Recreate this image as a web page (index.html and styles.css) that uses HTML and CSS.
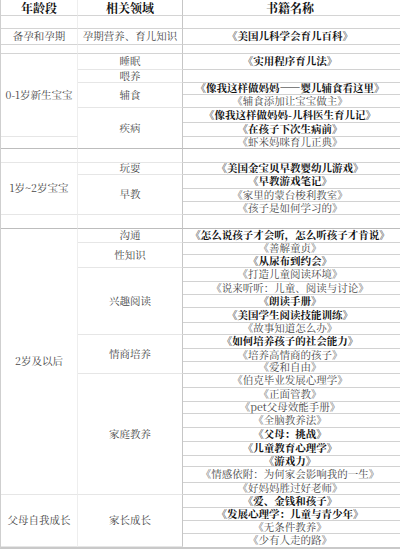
FILE: index.html
```html
<!DOCTYPE html>
<html lang="zh">
<head>
<meta charset="utf-8">
<link rel="stylesheet" href="styles.css">
</head>
<body>
<div class="sheet">
  <div class="c1 hd">年龄段</div><div class="c2 hd">相关领域</div><div class="c3 hd">书籍名称</div>
  <div class="c1 top"></div><div class="c2 top"></div><div class="c3"></div>
  <div class="c1 top">备孕和孕期</div><div class="c2 top">孕期营养、育儿知识</div><div class="c3 b">《美国儿科学会育儿百科》</div>
  <div class="c1 top"></div><div class="c2 top"></div><div class="c3"></div>

  <div class="c1 s6">0-1岁新生宝宝</div><div class="c2">睡眠</div><div class="c3 b">《实用程序育儿法》</div>
  <div class="c2">喂养</div><div class="c3"></div>
  <div class="c2 s2">辅食</div><div class="c3 b">《像我这样做妈妈——婴儿辅食看这里》</div>
  <div class="c3">《辅食添加让宝宝做主》</div>
  <div class="c2 s3 sec">疾病</div><div class="c3 b">《像我这样做妈妈-儿科医生育儿记》</div>
  <div class="c3 b">《在孩子下次生病前》</div>
  <div class="c1 sec"></div><div class="c3 sec">《虾米妈咪育儿正典》</div>
  <div class="c1"></div><div class="c2"></div><div class="c3"></div>

  <div class="c1 s4">1岁~2岁宝宝</div><div class="c2">玩耍</div><div class="c3 b">《美国金宝贝早教婴幼儿游戏》</div>
  <div class="c2 s3">早教</div><div class="c3 b">《早教游戏笔记》</div>
  <div class="c3">《家里的蒙台梭利教室》</div>
  <div class="c3">《孩子是如何学习的》</div>
  <div class="c1 sec"></div><div class="c2 sec"></div><div class="c3 sec"></div>

  <div class="c1 s20">2岁及以后</div><div class="c2">沟通</div><div class="c3 b">《怎么说孩子才会听，怎么听孩子才肯说》</div>
  <div class="c2 s2">性知识</div><div class="c3">《善解童贞》</div>
  <div class="c3 b">《从尿布到约会》</div>
  <div class="c2 s5">兴趣阅读</div><div class="c3">《打造儿童阅读环境》</div>
  <div class="c3">《说来听听：儿童、阅读与讨论》</div>
  <div class="c3 b">《朗读手册》</div>
  <div class="c3 b">《美国学生阅读技能训练》</div>
  <div class="c3">《故事知道怎么办》</div>
  <div class="c2 s3">情商培养</div><div class="c3 b">《如何培养孩子的社会能力》</div>
  <div class="c3">《培养高情商的孩子》</div>
  <div class="c3">《爱和自由》</div>
  <div class="c2 s9">家庭教养</div><div class="c3">《伯克毕业发展心理学》</div>
  <div class="c3">《正面管教》</div>
  <div class="c3">《pet父母效能手册》</div>
  <div class="c3">《全脑教养法》</div>
  <div class="c3 b">《父母：挑战》</div>
  <div class="c3 b">《儿童教育心理学》</div>
  <div class="c3 b">《游戏力》</div>
  <div class="c3">《情感依附：为何家会影响我的一生》</div>
  <div class="c3">《好妈妈胜过好老师》</div>

  <div class="c1 s4">父母自我成长</div><div class="c2 s4">家长成长</div><div class="c3 b">《爱、金钱和孩子》</div>
  <div class="c3 b">《发展心理学：儿童与青少年》</div>
  <div class="c3">《无条件教养》</div>
  <div class="c3 last">《少有人走的路》</div>
</div>
</body>
</html>
```

FILE: styles.css
```css
html, body {
  margin: 0;
  padding: 0;
  background: #ffffff;
}

.sheet {
  width: 400px;
  display: grid;
  grid-template-columns: 77px 105px 218px;
  grid-template-rows: 16px 13px 16px 9px 16px 13px 12px 13px 15px 14px 12px 14px 12px 14px 13px 13px 14px 14px 12px 13px 14px 13px 13px 15px 12px 14px 13px 12px 14px 14px 12px 14px 14px 14px 11px 16px 12px 13px 13px 13px 13px;
  border-left: 1px solid #cfcfcf;
  border-bottom: 2px solid #c9c9c9;
  box-sizing: content-box;
  font-family: "Noto Serif CJK SC", "Noto Sans CJK SC", serif;
  font-size: 10.5px;
  color: #474747;
}

.sheet > div {
  box-sizing: border-box;
  display: flex;
  align-items: center;
  justify-content: center;
  line-height: 1;
  white-space: nowrap;
  overflow: visible;
}

.c1 {
  grid-column: 1;
  border-right: 1px solid #eeeeee;
  border-bottom: 1px solid #e6e6e6;
}

.c2 {
  grid-column: 2;
  border-right: 1px solid #c6c6c6;
  border-bottom: 1px solid #e6e6e6;
}

.c3 {
  grid-column: 3;
  border-bottom: 1px solid #d2d2d2;
  padding-right: 4px;
}

.top { border-bottom-color: #d4d4d4; }
.sec { border-bottom-color: #bdbdbd; }
.last { border-bottom: none; }

.hd {
  font-size: 12px;
  font-weight: 700;
  color: #111;
  border-bottom-color: #d4d4d4;
  padding-top: 1px;
}

.b {
  font-weight: 700;
  color: #111;
}

.s2 { grid-row: span 2; }
.s3 { grid-row: span 3; }
.s4 { grid-row: span 4; }
.s5 { grid-row: span 5; }
.s6 { grid-row: span 6; }
.s9 { grid-row: span 9; }
.s20 { grid-row: span 20; }
```
